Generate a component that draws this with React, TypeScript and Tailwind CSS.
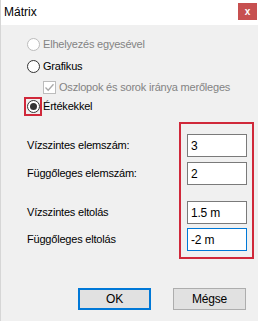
import React from 'react'

const font = { fontFamily: '"Liberation Sans", Arial, sans-serif' }

function Radio({ checked, disabled }: { checked?: boolean; disabled?: boolean }) {
  return (
    <span
      className={`flex h-[13px] w-[13px] shrink-0 items-center justify-center rounded-full border bg-white ${
        disabled ? 'border-[#bcbcbc]' : 'border-[#333333]'
      }`}
    >
      {checked && <span className="h-[7px] w-[7px] rounded-full bg-[#333333]" />}
    </span>
  )
}

function Field({ value, focused }: { value: string; focused?: boolean }) {
  return (
    <div
      className={`flex h-[23px] w-[60px] items-center border bg-white pl-[3px] text-[12px] text-black ${
        focused ? 'border-[#0078d7]' : 'border-[#7a7a7a]'
      }`}
    >
      {value}
    </div>
  )
}

export default function App() {
  return (
    <div
      className="h-[321px] w-[258px] overflow-hidden whitespace-nowrap border-l border-[#d6d6d6] bg-[#f0f0f0] text-[11px] tracking-[-0.2px] text-black"
      style={font}
    >
      {/* title bar */}
      <div className="flex h-[25px] items-start justify-between bg-white">
        <span className="pl-[3px] pt-[5px] text-[12px] leading-[14px] tracking-normal">Mátrix</span>
        <span className="mr-[1px] mt-[3px] flex h-[17px] w-[19px] items-center justify-center bg-[#c75050] text-[10px] font-bold leading-none text-white">
          x
        </span>
      </div>

      {/* options */}
      <div className="flex flex-col pl-[26px] pt-[12px]">
        <div className="flex h-[14px] items-center gap-[3px] text-[#838383]">
          <Radio disabled />
          <span>Elhelyezés egyesével</span>
        </div>
        <div className="mt-[8px] flex h-[14px] items-center gap-[3px]">
          <Radio />
          <span>Grafikus</span>
        </div>
        <div className="ml-[16px] mt-[7px] flex h-[14px] items-center gap-[3px] text-[#838383]">
          <span className="flex h-[13px] w-[13px] items-center justify-center border border-[#bcbcbc] bg-white">
            <svg width="11" height="11" viewBox="0 0 11 11">
              <path d="M1.5 5.5 L4.2 8.3 L9.5 2.2" fill="none" stroke="#a8a8a8" strokeWidth="1.3" />
            </svg>
          </span>
          <span>Oszlopok és sorok iránya merőleges</span>
        </div>
        <div className="mt-[5px] flex h-[14px] items-center gap-[3px]">
          <span className="relative flex">
            <Radio checked />
            <span className="absolute -left-[3px] -top-[3px] h-[19px] w-[18px] border-2 border-[#d0283a]" />
          </span>
          <span>Értékekkel</span>
        </div>
      </div>

      {/* values */}
      <div className="mt-[9px] flex">
        <div className="flex w-[178px] flex-col pl-[26px] pt-[12px]">
          <div className="flex h-[23px] items-center">Vízszintes elemszám:</div>
          <div className="mt-[5px] flex h-[23px] items-center">Függőleges elemszám:</div>
          <div className="mt-[16px] flex h-[23px] items-center">Vízszintes eltolás</div>
          <div className="mt-[4px] flex h-[23px] items-center">Függőleges eltolás</div>
        </div>
        <div className="flex h-[137px] w-[75px] flex-col border-2 border-[#d0283a] pl-[6px] pt-[10px]">
          <Field value="3" />
          <div className="mt-[5px]">
            <Field value="2" />
          </div>
          <div className="mt-[16px]">
            <Field value="1.5 m" />
          </div>
          <div className="mt-[4px]">
            <Field value="-2 m" focused />
          </div>
        </div>
      </div>

      {/* buttons */}
      <div className="mt-[29px] flex gap-[22px] pl-[77px]">
        <button className="h-[22px] w-[73px] border-2 border-[#0078d7] bg-[#e1e1e1] text-[12px] leading-none">OK</button>
        <button className="h-[22px] w-[73px] border border-[#adadad] bg-[#e1e1e1] text-[12px] leading-none">Mégse</button>
      </div>
    </div>
  )
}
